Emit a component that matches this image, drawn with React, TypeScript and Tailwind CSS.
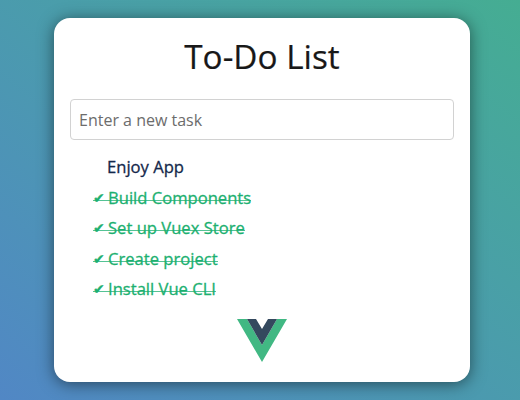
export default function App() {
  const done = ["Build Components", "Set up Vuex Store", "Create project", "Install Vue CLI"];
  return (
    <div className="h-[400px] w-[520px] overflow-hidden bg-linear-to-tr from-[#5187c5] to-[#45ad92] px-[54px] pt-[18px] font-['Open_Sans',sans-serif]">
      <main className="h-[364px] w-[416px] rounded-[16px] bg-white px-4 shadow-[0_2px_16px_rgba(0,0,0,0.5)]">
        <h1 className="pt-4 text-center text-[33.3px] leading-[44px] text-[#181818] [-webkit-text-stroke:0.2px_currentColor]">To-Do List</h1>
        <input
          placeholder="Enter a new task"
          className="mt-[21px] block h-[41px] w-full rounded-[4px] border border-[#d2d2d2] px-2 text-[16px] text-[#6c6c6c] placeholder:text-[#6c6c6c] outline-none"
        />
        <ul className="mt-[12px] pl-[23px] text-[16.6px] leading-[30.5px] [-webkit-text-stroke:0.3px_currentColor]">
          <li className="h-[30.5px] pl-[14px] text-[#14284b]">Enjoy App</li>
          {done.map((t) => (
            <li key={t} className="flex h-[30.5px] text-[#1cb070]">
              <span className="flex bg-[linear-gradient(#55c394,#55c394)] bg-[length:100%_1px] bg-[position:0_17px] bg-no-repeat">
                <span className="w-[15px] text-[14px]">✔</span>
                {t}
              </span>
            </li>
          ))}
        </ul>
        <svg className="mx-auto mt-[14px] block" width="50" height="43" viewBox="0 0 50 43">
          <path d="M0 0h10l15 26L40 0h10L25 43z" fill="#41b883" />
          <path d="M10 0h9l6 10 6-10h9L25 26z" fill="#34495e" />
        </svg>
      </main>
    </div>
  );
}
